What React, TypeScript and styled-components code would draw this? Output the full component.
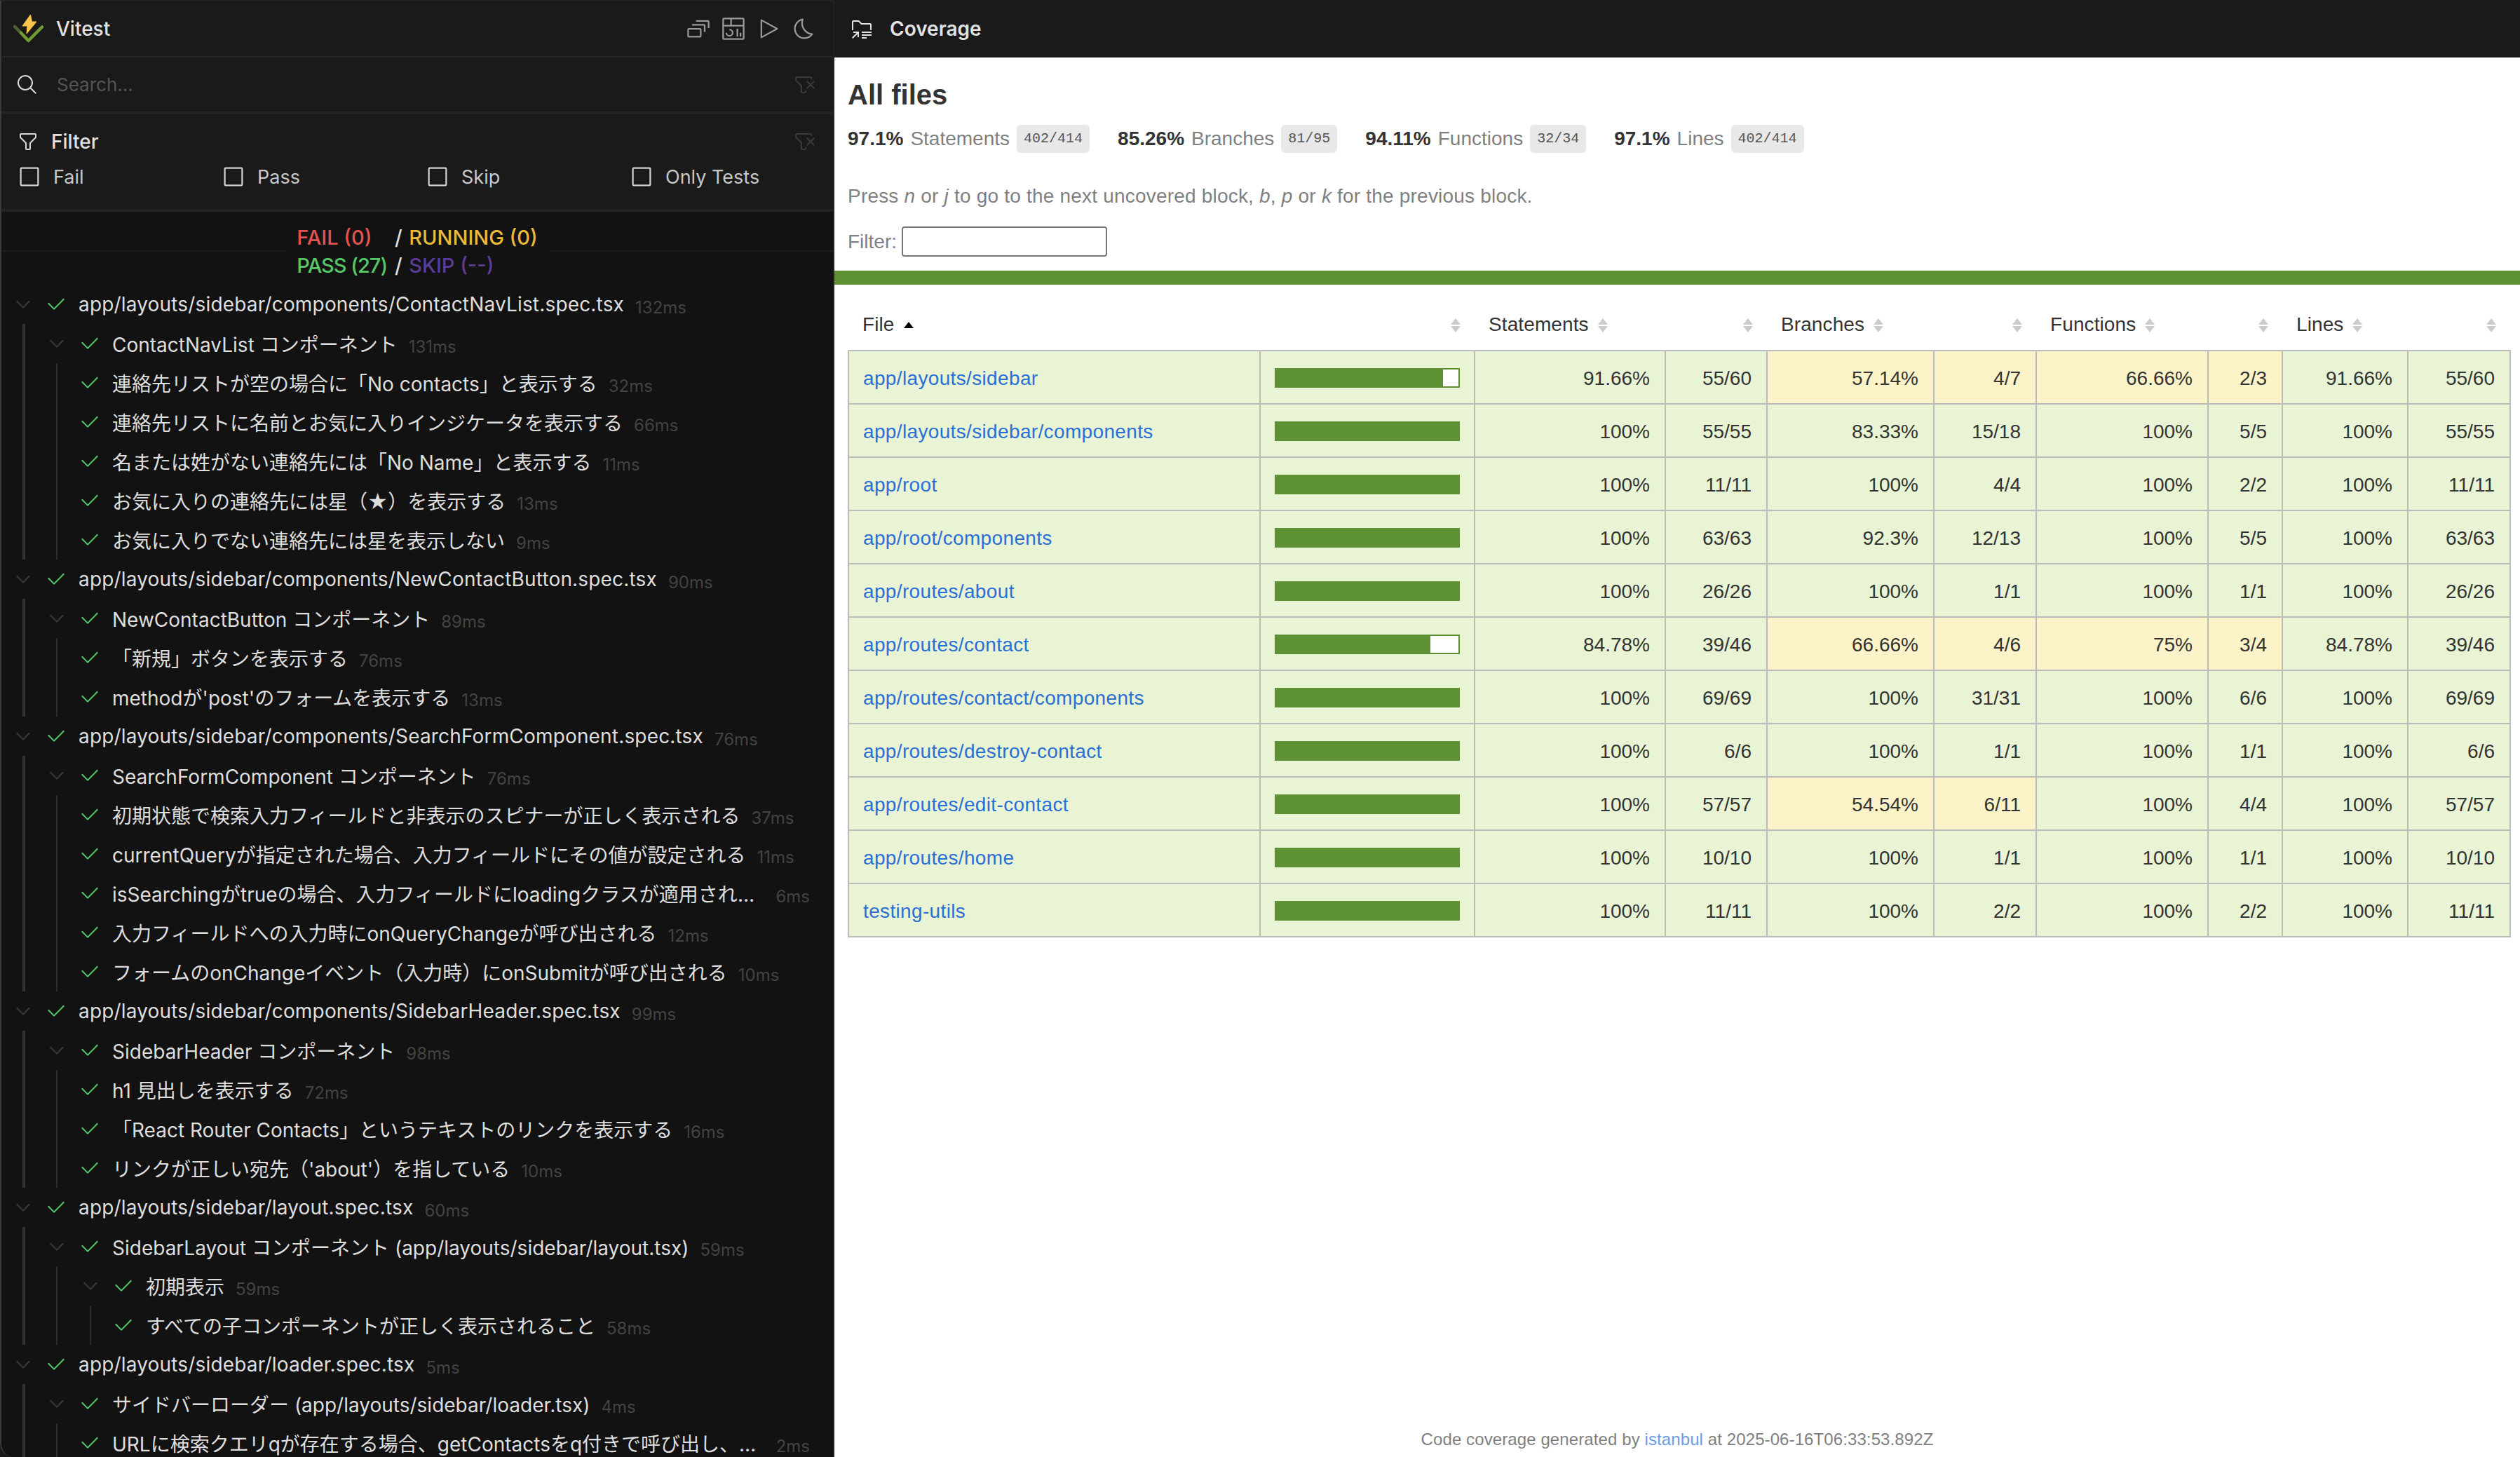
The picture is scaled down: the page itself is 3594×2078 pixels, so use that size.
import styled, { createGlobalStyle } from 'styled-components';

const SANS = `Inter, "Noto Sans CJK JP", sans-serif`;
const HELV = `"Liberation Sans", Arial, sans-serif`;

type IconProps = { d: string; size: number; color: string };

function Icon({ d, size, color }: IconProps) {
  return (
    <svg width={size} height={size} viewBox="0 0 32 32" fill={color} style={{ flexShrink: 0 }}>
      <path d={d} />
    </svg>
  );
}

const ICONS = {
  collapse:
    'M30 15h-2V7H13V5h15a2 2 0 0 1 2 2z M25 20h-2v-8H8v-2h15a2 2 0 0 1 2 2z M18 27H4a2 2 0 0 1-2-2v-8a2 2 0 0 1 2-2h14a2 2 0 0 1 2 2v8a2 2 0 0 1-2 2zM4 17v8h14V17z',
  dashboard:
    'M24 21h2v5h-2z M20 16h2v10h-2z M11 26a5 5 0 0 1-5-5h2a3 3 0 1 0 3-3v-2a5 5 0 0 1 0 10z M28 2H4a2 2 0 0 0-2 2v24a2 2 0 0 0 2 2h24a2 2 0 0 0 2-2V4a2 2 0 0 0-2-2zm0 9H14V4h14zM12 4v7H4V4zM4 28V13h24v15z',
  play: 'M7 28a1 1 0 0 1-1-1V5a1 1 0 0 1 1.482-.876l20 11a1 1 0 0 1 0 1.752l-20 11A1 1 0 0 1 7 28zM8 6.69v18.62L24.925 16z',
  moon: 'M13.502 5.414a15.075 15.075 0 0 0 11.594 18.194a11.113 11.113 0 0 1-7.975 3.39c-.138 0-.278.005-.418 0a11.094 11.094 0 0 1-3.2-21.584M14.98 3a1.002 1.002 0 0 0-.175.016a13.096 13.096 0 0 0 1.825 25.981c.164.006.328 0 .49 0a13.072 13.072 0 0 0 10.703-5.555a1.01 1.01 0 0 0-.783-1.565A13.08 13.08 0 0 1 15.89 4.38A1.015 1.015 0 0 0 14.98 3z',
  folder:
    'M16 28h7v2h-7z M16 24h14v2H16z M16 20h14v2H16z M4 20v2h4.586L2 28.586L3.414 30L10 23.414V28h2v-8H4z M28 8H16l-3.414-3.414A2 2 0 0 0 11.172 4H4a2 2 0 0 0-2 2v12h2V6h7.172l3.414 3.414l.586.586H28v8h2v-8a2 2 0 0 0-2-2z',
  search: 'M29 27.586l-7.552-7.552a11.018 11.018 0 1 0-1.414 1.414L27.586 29zM4 13a9 9 0 1 1 9 9a9.01 9.01 0 0 1-9-9z',
  filter:
    'M18 28h-4a2 2 0 0 1-2-2v-7.59L4.59 11A2 2 0 0 1 4 9.59V6a2 2 0 0 1 2-2h20a2 2 0 0 1 2 2v3.59a2 2 0 0 1-.59 1.41L20 18.41V26a2 2 0 0 1-2 2zM6 6v3.59l8 8V26h4v-8.41l8-8V6z',
  filterRemove:
    'M30 11.414L28.586 10L24 14.586L19.414 10L18 11.414L22.586 16L18 20.585L19.415 22L24 17.414L28.587 22L30 20.587L25.414 16L30 11.414z M4 4a2 2 0 0 0-2 2v3.17a2 2 0 0 0 .586 1.415L10 18v8a2 2 0 0 0 2 2h4a2 2 0 0 0 2-2v-2h-2v2h-4v-8.83l-.586-.585L4 9.171V6h20v2h2V6a2 2 0 0 0-2-2z',
  checkbox: 'M26 4H6a2 2 0 0 0-2 2v20a2 2 0 0 0 2 2h20a2 2 0 0 0 2-2V6a2 2 0 0 0-2-2zM6 26V6h20v20z',
  check: 'M13 24l-9-9 1.414-1.414L13 21.171 26.586 7.586 28 9 13 24z',
  chevron: 'M16 22L6 12l1.4-1.4 8.6 8.6 8.6-8.6L26 12z',
};

function Logo() {
  return (
    <svg width="46" height="42" viewBox="0 0 46 42" fill="none">
      <path d="M3 18L12 27" stroke="#4e6130" strokeWidth="4.5" strokeLinecap="round" />
      <path d="M12 27L22.5 38L42 18.5" stroke="#729b34" strokeWidth="4.5" strokeLinecap="round" strokeLinejoin="round" />
      <path d="M25.5 1L14 17H21L20 28L34 11H27.5L25.5 1Z" fill="#f8c647" stroke="#f8c647" strokeWidth="1" strokeLinejoin="round" />
    </svg>
  );
}

type TreeRow = { name: string; time: string; level: number; guides: number; group?: boolean };

const group = (level: number, name: string, time: string): TreeRow => ({ name, time, level, guides: level, group: true });
const leaf = (level: number, name: string, time: string): TreeRow => ({ name, time, level, guides: level + 1 });

const TREE: TreeRow[] = [
  group(0, 'app/layouts/sidebar/components/ContactNavList.spec.tsx', '132ms'),
  group(1, 'ContactNavList コンポーネント', '131ms'),
  leaf(1, '連絡先リストが空の場合に「No contacts」と表示する', '32ms'),
  leaf(1, '連絡先リストに名前とお気に入りインジケータを表示する', '66ms'),
  leaf(1, '名または姓がない連絡先には「No Name」と表示する', '11ms'),
  leaf(1, 'お気に入りの連絡先には星（★）を表示する', '13ms'),
  leaf(1, 'お気に入りでない連絡先には星を表示しない', '9ms'),
  group(0, 'app/layouts/sidebar/components/NewContactButton.spec.tsx', '90ms'),
  group(1, 'NewContactButton コンポーネント', '89ms'),
  leaf(1, '「新規」ボタンを表示する', '76ms'),
  leaf(1, "methodが'post'のフォームを表示する", '13ms'),
  group(0, 'app/layouts/sidebar/components/SearchFormComponent.spec.tsx', '76ms'),
  group(1, 'SearchFormComponent コンポーネント', '76ms'),
  leaf(1, '初期状態で検索入力フィールドと非表示のスピナーが正しく表示される', '37ms'),
  leaf(1, 'currentQueryが指定された場合、入力フィールドにその値が設定される', '11ms'),
  leaf(1, 'isSearchingがtrueの場合、入力フィールドにloadingクラスが適用され、スピナーが表示される', '6ms'),
  leaf(1, '入力フィールドへの入力時にonQueryChangeが呼び出される', '12ms'),
  leaf(1, 'フォームのonChangeイベント（入力時）にonSubmitが呼び出される', '10ms'),
  group(0, 'app/layouts/sidebar/components/SidebarHeader.spec.tsx', '99ms'),
  group(1, 'SidebarHeader コンポーネント', '98ms'),
  leaf(1, 'h1 見出しを表示する', '72ms'),
  leaf(1, '「React Router Contacts」というテキストのリンクを表示する', '16ms'),
  leaf(1, "リンクが正しい宛先（'about'）を指している", '10ms'),
  group(0, 'app/layouts/sidebar/layout.spec.tsx', '60ms'),
  group(1, 'SidebarLayout コンポーネント (app/layouts/sidebar/layout.tsx)', '59ms'),
  group(2, '初期表示', '59ms'),
  leaf(2, 'すべての子コンポーネントが正しく表示されること', '58ms'),
  group(0, 'app/layouts/sidebar/loader.spec.tsx', '5ms'),
  group(1, 'サイドバーローダー (app/layouts/sidebar/loader.tsx)', '4ms'),
  leaf(1, 'URLに検索クエリqが存在する場合、getContactsをq付きで呼び出し、検索クエリを返す', '2ms'),
];

type Cov = { file: string; pct: number; s: string; sf: string; b: string; bf: string; bLow?: boolean; f: string; ff: string; fLow?: boolean };

const COVERAGE: Cov[] = [
  { file: 'app/layouts/sidebar', pct: 91.66, s: '91.66%', sf: '55/60', b: '57.14%', bf: '4/7', bLow: true, f: '66.66%', ff: '2/3', fLow: true },
  { file: 'app/layouts/sidebar/components', pct: 100, s: '100%', sf: '55/55', b: '83.33%', bf: '15/18', f: '100%', ff: '5/5' },
  { file: 'app/root', pct: 100, s: '100%', sf: '11/11', b: '100%', bf: '4/4', f: '100%', ff: '2/2' },
  { file: 'app/root/components', pct: 100, s: '100%', sf: '63/63', b: '92.3%', bf: '12/13', f: '100%', ff: '5/5' },
  { file: 'app/routes/about', pct: 100, s: '100%', sf: '26/26', b: '100%', bf: '1/1', f: '100%', ff: '1/1' },
  { file: 'app/routes/contact', pct: 84.78, s: '84.78%', sf: '39/46', b: '66.66%', bf: '4/6', bLow: true, f: '75%', ff: '3/4', fLow: true },
  { file: 'app/routes/contact/components', pct: 100, s: '100%', sf: '69/69', b: '100%', bf: '31/31', f: '100%', ff: '6/6' },
  { file: 'app/routes/destroy-contact', pct: 100, s: '100%', sf: '6/6', b: '100%', bf: '1/1', f: '100%', ff: '1/1' },
  { file: 'app/routes/edit-contact', pct: 100, s: '100%', sf: '57/57', b: '54.54%', bf: '6/11', bLow: true, f: '100%', ff: '4/4' },
  { file: 'app/routes/home', pct: 100, s: '100%', sf: '10/10', b: '100%', bf: '1/1', f: '100%', ff: '1/1' },
  { file: 'testing-utils', pct: 100, s: '100%', sf: '11/11', b: '100%', bf: '2/2', f: '100%', ff: '2/2' },
];

const STATS = [
  { pct: '97.1%', label: 'Statements', frac: '402/414' },
  { pct: '85.26%', label: 'Branches', frac: '81/95' },
  { pct: '94.11%', label: 'Functions', frac: '32/34' },
  { pct: '97.1%', label: 'Lines', frac: '402/414' },
];

const COL_WIDTHS = [587, 306, 272, 145, 238, 146, 245, 106, 179, 146];

function Sorter({ active }: { active?: boolean }) {
  if (active) {
    return (
      <SorterBox width="14" height="20" viewBox="0 0 14 20">
        <path d="M7 5L14 14H0Z" fill="#000" />
      </SorterBox>
    );
  }
  return (
    <SorterBox width="14" height="20" viewBox="0 0 14 20">
      <path d="M7 0L14 9H0Z M0 11H14L7 20Z" fill="#cbcbcb" />
    </SorterBox>
  );
}

function App() {
  return (
    <>
      <GlobalStyle />
      <Page>
        <Sidebar>
          <TopBar>
            <Logo />
            <Brand>Vitest</Brand>
            <TopActions>
              <Icon d={ICONS.collapse} size={36} color="#9a9a9a" />
              <Icon d={ICONS.dashboard} size={36} color="#9a9a9a" />
              <Icon d={ICONS.play} size={36} color="#9a9a9a" />
              <Icon d={ICONS.moon} size={36} color="#9a9a9a" />
            </TopActions>
          </TopBar>

          <SearchBar>
            <Icon d={ICONS.search} size={32} color="#d8d8d8" />
            <SearchInput placeholder="Search..." />
            <Icon d={ICONS.filterRemove} size={32} color="#3a3a3a" />
          </SearchBar>

          <FilterPanel>
            <FilterHead>
              <Icon d={ICONS.filter} size={32} color="#d8d8d8" />
              <FilterTitle>Filter</FilterTitle>
              <Icon d={ICONS.filterRemove} size={32} color="#3a3a3a" />
            </FilterHead>
            <FilterOptions>
              {['Fail', 'Pass', 'Skip', 'Only Tests'].map((label) => (
                <FilterOption key={label}>
                  <Icon d={ICONS.checkbox} size={36} color="#d0d0d0" />
                  {label}
                </FilterOption>
              ))}
            </FilterOptions>
          </FilterPanel>

          <Tree>
            <Summary>
              <SummaryGrid>
                <Status $color="#e2524f">FAIL (0)</Status>
                <Slash>/</Slash>
                <Status $color="#e9b93b">RUNNING (0)</Status>
                <Status $color="#57c768" $tight>PASS (27)</Status>
                <Slash>/</Slash>
                <Status $color="#5c3c97">SKIP (--)</Status>
              </SummaryGrid>
            </Summary>

            {TREE.map((row, i) => (
              <Row key={i} $level={row.level} $guides={row.guides}>
                <ChevronSlot>{row.group && <Icon d={ICONS.chevron} size={32} color="#3b3b3b" />}</ChevronSlot>
                <Icon d={ICONS.check} size={32} color="#52c566" />
                <Name $file={row.level === 0}>{row.name}</Name>
                <Time>{row.time}</Time>
              </Row>
            ))}
          </Tree>
        </Sidebar>

        <Main>
          <MainBar>
            <Icon d={ICONS.folder} size={32} color="#e4e4e4" />
            <MainTitle>Coverage</MainTitle>
          </MainBar>

          <Report>
            <Intro>
              <Heading>All files</Heading>
              <Stats>
                {STATS.map((stat) => (
                  <Stat key={stat.label}>
                    <strong>{stat.pct}</strong>
                    <Quiet>{stat.label}</Quiet>
                    <Fraction>{stat.frac}</Fraction>
                  </Stat>
                ))}
              </Stats>
              <Hint>
                Press <em>n</em> or <em>j</em> to go to the next uncovered block, <em>b</em>, <em>p</em> or <em>k</em> for the previous block.
              </Hint>
              <FilterLine>
                Filter:
                <FilterInput type="text" />
              </FilterLine>
            </Intro>

            <StatusLine />

            <TableWrap>
              <Table>
                <colgroup>
                  {COL_WIDTHS.map((w, i) => (
                    <col key={i} width={w} />
                  ))}
                </colgroup>
                <thead>
                  <tr>
                    <Th>File<Sorter active /></Th>
                    <Th $right><Sorter /></Th>
                    <Th>Statements<Sorter /></Th>
                    <Th $right><Sorter /></Th>
                    <Th>Branches<Sorter /></Th>
                    <Th $right><Sorter /></Th>
                    <Th>Functions<Sorter /></Th>
                    <Th $right><Sorter /></Th>
                    <Th>Lines<Sorter /></Th>
                    <Th $right><Sorter /></Th>
                  </tr>
                </thead>
                <tbody>
                  {COVERAGE.map((c) => (
                    <tr key={c.file}>
                      <FileCell><FileLink href="#">{c.file}</FileLink></FileCell>
                      <BarCell>
                        <Chart>
                          <ChartFill style={{ width: `${c.pct}%` }} />
                        </Chart>
                      </BarCell>
                      <NumCell>{c.s}</NumCell>
                      <NumCell>{c.sf}</NumCell>
                      <NumCell $warn={c.bLow}>{c.b}</NumCell>
                      <NumCell $warn={c.bLow}>{c.bf}</NumCell>
                      <NumCell $warn={c.fLow}>{c.f}</NumCell>
                      <NumCell $warn={c.fLow}>{c.ff}</NumCell>
                      <NumCell>{c.s}</NumCell>
                      <NumCell>{c.sf}</NumCell>
                    </tr>
                  ))}
                </tbody>
              </Table>
            </TableWrap>

            <Footer>
              Code coverage generated by <FooterLink href="#">istanbul</FooterLink> at 2025-06-16T06:33:53.892Z
            </Footer>
          </Report>
        </Main>
      </Page>
    </>
  );
}

export default App;

const GlobalStyle = createGlobalStyle`
  html, body {
    margin: 0;
    padding: 0;
    background: #ffffff;
  }
`;

const Page = styled.div`
  width: 3594px;
  height: 2078px;
  display: grid;
  grid-template-columns: 1190px 1fr;
  overflow: hidden;
  background: #1a1a1a;
`;

const Sidebar = styled.aside`
  display: flex;
  flex-direction: column;
  min-width: 0;
  height: 2078px;
  box-sizing: border-box;
  overflow: hidden;
  background: #1a1a1a;
  border-left: 2px solid #3c3c3c;
  border-right: 2px solid #222222;
  border-top: 2px solid #222222;
  border-bottom-left-radius: 20px;
  font-family: ${SANS};
  color: #dcdcdc;
`;

const TopBar = styled.header`
  height: 80px;
  flex-shrink: 0;
  box-sizing: border-box;
  display: flex;
  align-items: center;
  padding: 0 24px 0 16px;
  border-bottom: 2px solid #242424;
`;

const Brand = styled.span`
  margin-left: 16px;
  font-size: 28px;
  font-weight: 500;
  color: #e2e2e2;
`;

const TopActions = styled.div`
  margin-left: auto;
  display: flex;
  align-items: center;
  gap: 14px;
`;

const SearchBar = styled.div`
  height: 81px;
  flex-shrink: 0;
  box-sizing: border-box;
  display: flex;
  align-items: center;
  padding: 0 24px 0 21px;
  border-bottom: 4px solid #232323;
`;

const SearchInput = styled.input`
  flex: 1;
  margin-left: 26px;
  background: none;
  border: 0;
  outline: 0;
  padding: 0;
  font-family: ${SANS};
  font-size: 26px;
  color: #dcdcdc;

  &::placeholder {
    color: #555555;
    opacity: 1;
  }
`;

const FilterPanel = styled.div`
  height: 139px;
  flex-shrink: 0;
  box-sizing: border-box;
  padding: 21px 24px 0 22px;
  border-bottom: 4px solid #232323;
`;

const FilterHead = styled.div`
  display: flex;
  align-items: center;
  height: 36px;
`;

const FilterTitle = styled.span`
  flex: 1;
  margin-left: 17px;
  font-size: 28px;
  font-weight: 500;
  color: #e2e2e2;
`;

const FilterOptions = styled.div`
  display: grid;
  grid-template-columns: repeat(4, 291px);
  margin-top: 14px;
`;

const FilterOption = styled.label`
  display: flex;
  align-items: center;
  gap: 16px;
  font-size: 27px;
  color: #c8c8c8;
`;

const Tree = styled.div`
  flex: 1;
  min-height: 0;
  overflow: hidden;
  background: #121212;
`;

const Summary = styled.div`
  height: 104px;
  display: flex;
  justify-content: center;
  box-sizing: border-box;
  padding-top: 16px;
  background: linear-gradient(#1c1c1c, #1c1c1c) 0 55px / 100% 2px no-repeat;
`;

const SummaryGrid = styled.div`
  display: grid;
  grid-template-columns: 130px 30px auto;
  grid-auto-rows: 40px;
  align-items: center;
  align-self: flex-start;
  padding: 0 16px;
  background: #121212;
  font-size: 29px;
  font-weight: 500;
`;

const Status = styled.span<{ $color: string; $tight?: boolean }>`
  color: ${(p) => p.$color};
  letter-spacing: ${(p) => (p.$tight ? '-1px' : '0')};
  white-space: nowrap;
`;

const Slash = styled.span`
  color: #dddddd;
  text-align: center;
`;

// guide lines come from the row background, one layer per ancestor
const guideLayers = (count: number) => {
  const layers: string[] = [];
  for (let i = 0; i < count; i++) {
    const colour = i === 0 ? '#333333' : '#2c2c2c';
    const width = i === 0 ? 4 : 2;
    const x = i === 0 ? 30 : 78 + (i - 1) * 48;
    layers.push(`linear-gradient(${colour}, ${colour}) ${x}px 0 / ${width}px 100% no-repeat`);
  }
  return layers.length ? layers.join(', ') : 'none';
};

const Row = styled.div<{ $level: number; $guides: number }>`
  height: 56px;
  display: flex;
  align-items: center;
  box-sizing: border-box;
  padding-left: ${(p) => p.$level * 48}px;
  padding-right: 33px;
  background: ${(p) => guideLayers(p.$guides)};
`;

const ChevronSlot = styled.span`
  width: 62px;
  flex-shrink: 0;
  display: flex;
  justify-content: center;
`;

const Name = styled.span<{ $file?: boolean }>`
  margin-left: 16px;
  min-width: 0;
  overflow: hidden;
  text-overflow: ellipsis;
  white-space: nowrap;
  font-size: 28px;
  letter-spacing: ${(p) => (p.$file ? '0.17px' : '0')};
  color: #dedede;
`;

const Time = styled.span`
  flex-shrink: 0;
  margin-left: 16px;
  margin-top: 8px;
  font-size: 24px;
  color: #434343;
`;

const Main = styled.main`
  display: flex;
  flex-direction: column;
  min-width: 0;
  height: 2078px;
  background: #ffffff;
`;

const MainBar = styled.header`
  height: 82px;
  flex-shrink: 0;
  box-sizing: border-box;
  display: flex;
  align-items: center;
  gap: 24px;
  padding-left: 23px;
  background: #1a1a1a;
  font-family: ${SANS};
`;

const MainTitle = styled.span`
  font-size: 28px;
  font-weight: 600;
  color: #e2e2e2;
`;

const Report = styled.section`
  flex: 1;
  min-height: 0;
  display: flex;
  flex-direction: column;
  font-family: ${HELV};
  font-size: 28px;
  color: #333333;
`;

const Intro = styled.div`
  padding: 31px 0 20px 19px;
`;

const Heading = styled.h1`
  margin: 0;
  font-size: 40px;
  line-height: 44px;
  font-weight: 700;
`;

const Stats = styled.div`
  display: flex;
  gap: 40px;
  margin-top: 21px;
`;

const Stat = styled.div`
  display: flex;
  align-items: center;
  gap: 10px;
  height: 40px;
  white-space: pre;
`;

const Quiet = styled.span`
  color: #7f7f7f;
`;

const Fraction = styled.span`
  font-family: "Liberation Mono", monospace;
  font-size: 20px;
  line-height: 24px;
  padding: 8px 10px;
  border-radius: 6px;
  background: #e8e8e8;
  color: #555555;
`;

const Hint = styled.p`
  margin: 45px 0 0;
  line-height: 34px;
  letter-spacing: 0.2px;
  color: #7f7f7f;
`;

const FilterLine = styled.div`
  display: flex;
  align-items: center;
  gap: 7px;
  margin-top: 26px;
  height: 43px;
  color: #7f7f7f;
`;

const FilterInput = styled.input`
  width: 293px;
  height: 43px;
  box-sizing: border-box;
  border: 2px solid #767676;
  border-radius: 4px;
  background: #ffffff;
  padding: 0;
`;

const StatusLine = styled.div`
  height: 20px;
  flex-shrink: 0;
  background: #5e9034;
`;

const TableWrap = styled.div`
  padding: 0 14px 0 19px;
`;

const Table = styled.table`
  width: 2370px;
  table-layout: fixed;
  border-collapse: collapse;
`;

const SorterBox = styled.svg`
  margin-left: 13px;
  vertical-align: -2px;
`;

const Th = styled.th<{ $right?: boolean }>`
  height: 94px;
  box-sizing: border-box;
  padding: 20px 20px 0;
  font-weight: 400;
  letter-spacing: 0.1px;
  white-space: nowrap;
  text-align: ${(p) => (p.$right ? 'right' : 'left')};
`;

const Td = styled.td`
  height: 76px;
  box-sizing: border-box;
  border: 2px solid #bbbbbb;
  background: #e9f4d4;
  white-space: nowrap;
`;

const FileCell = styled(Td)`
  padding: 3px 20px 0;
`;

const FileLink = styled.a`
  color: #2a6fd6;
  letter-spacing: 0.35px;
  text-decoration: none;
`;

const BarCell = styled(Td)`
  padding: 2px 20px 0;
`;

const Chart = styled.div`
  height: 28px;
  box-sizing: border-box;
  border: 2px solid #5e9034;
  background: #ffffff;
`;

const ChartFill = styled.div`
  height: 100%;
  background: #5e9034;
`;

const NumCell = styled(Td)<{ $warn?: boolean }>`
  padding: 3px 21px 0 20px;
  text-align: right;
  background: ${(p) => (p.$warn ? '#fdf3c8' : '#e9f4d4')};
`;

const Footer = styled.footer`
  margin-top: auto;
  padding-bottom: 11px;
  text-align: center;
  font-size: 24px;
  line-height: 28px;
  letter-spacing: 0.1px;
  color: #7f7f7f;
`;

const FooterLink = styled.a`
  color: #6c9be6;
  text-decoration: none;
`;
